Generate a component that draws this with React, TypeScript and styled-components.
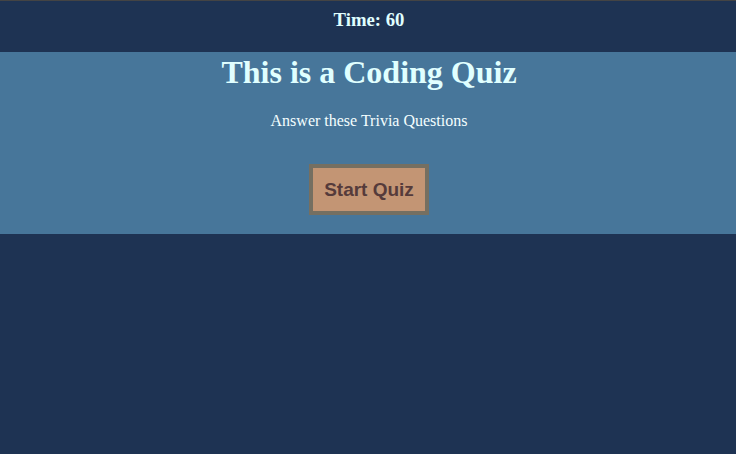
import styled, { createGlobalStyle } from "styled-components";

const GlobalStyle = createGlobalStyle`
  html, body {
    margin: 0;
    padding: 0;
    background: #1e3353;
    font-family: "Liberation Serif", "Times New Roman", serif;
  }
  body {
    border-top: 1px solid #444;
    min-height: 453px;
  }
`;

const Header = styled.header`
  height: 51px;
  display: flex;
  justify-content: center;
  padding: 8px 0 0 2px;
  box-sizing: border-box;
`;
const Timer = styled.h3`
  margin: 0;
  font-size: 18.72px;
  font-weight: bold;
  color: #e0ffff;
`;
const Intro = styled.section`
  background: #47769a;
  display: flex;
  flex-direction: column;
  align-items: center;
  padding: 2px 0 19px 2px;
`;
const Title = styled.h1`
  margin: 0 0 21px;
  font-size: 32px;
  color: #e0ffff;
`;
const Subtitle = styled.p`
  margin: 0 0 34px;
  font-size: 16px;
  color: #f4ffff;
`;
const StartButton = styled.button`
  height: 51px;
  padding: 0 11px;
  border: 4px solid #756f61;
  background: #c39574;
  color: #553b3b;
  font-family: "Liberation Sans", Arial, sans-serif;
  font-weight: bold;
  font-size: 19px;
  cursor: pointer;
`;

export default function App() {
  return (
    <>
      <GlobalStyle />
      <Header>
        <Timer>Time: 60</Timer>
      </Header>
      <Intro>
        <Title>This is a Coding Quiz</Title>
        <Subtitle>Answer these Trivia Questions</Subtitle>
        <StartButton>Start Quiz</StartButton>
      </Intro>
    </>
  );
}
